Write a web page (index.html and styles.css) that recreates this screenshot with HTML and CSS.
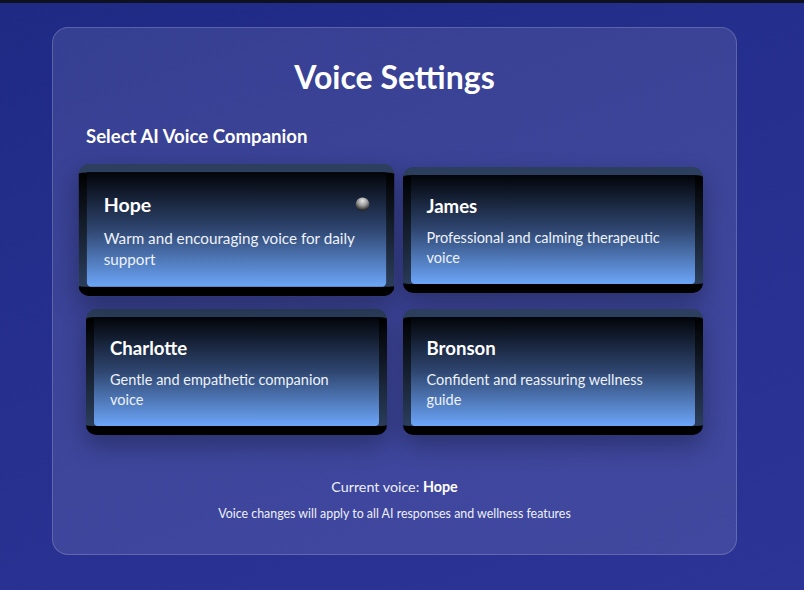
FILE: index.html
```html
<!DOCTYPE html>
<html>
<head>
<meta charset="utf-8">
<link rel="stylesheet" href="styles.css">
</head>
<body>
<div class="topbar"></div>
<div class="page">
  <section class="panel">
    <h1 class="title">Voice Settings</h1>
    <h2 class="subtitle">Select AI Voice Companion</h2>
    <div class="voices">
      <div class="voice selected">
        <div class="voice-inner">
          <div class="voice-name">Hope</div>
          <div class="voice-desc">Warm and encouraging voice for daily support</div>
          <span class="dot"></span>
        </div>
      </div>
      <div class="voice">
        <div class="voice-inner">
          <div class="voice-name">James</div>
          <div class="voice-desc">Professional and calming therapeutic voice</div>
        </div>
      </div>
      <div class="voice">
        <div class="voice-inner">
          <div class="voice-name">Charlotte</div>
          <div class="voice-desc">Gentle and empathetic companion voice</div>
        </div>
      </div>
      <div class="voice">
        <div class="voice-inner">
          <div class="voice-name">Bronson</div>
          <div class="voice-desc">Confident and reassuring wellness guide</div>
        </div>
      </div>
    </div>
    <p class="current">Current voice: <strong>Hope</strong></p>
    <p class="note">Voice changes will apply to all AI responses and wellness features</p>
  </section>
</div>
</body>
</html>
```

FILE: styles.css
```css
* { box-sizing: border-box; }
html, body { height: 100%; }
body {
  margin: 0;
  font-family: Lato, "Open Sans", sans-serif;
  color: #fff;
  background: linear-gradient(160deg, #1f2a85 0%, #27308f 50%, #2c3596 100%);
  min-height: 590px;
}
.topbar { height: 3px; background: #0e1220; }
.page {
  display: flex;
  justify-content: center;
  padding: 24px 15px 0 0;
}
.panel {
  width: 685px;
  border-radius: 16px;
  background: rgba(255, 255, 255, 0.1);
  border: 1px solid rgba(255, 255, 255, 0.18);
  padding: 29px 33px 32px;
}
.title {
  margin: 0;
  font-size: 32px;
  line-height: 40px;
  font-weight: 700;
  text-align: center;
}
.subtitle {
  margin: 27px 0 19px;
  font-size: 18.6px;
  line-height: 24px;
  font-weight: 700;
}
.voices {
  display: grid;
  grid-template-columns: 1fr 1fr;
  gap: 16px 16px;
}
.voice {
  border-radius: 10px;
  border-top: 8px solid #2c3f5e;
  border-bottom: 9px solid #000;
  padding: 0 8px;
  background: linear-gradient(180deg, #000 0%, #2b3e5c 100%);
  box-shadow: 0 10px 24px rgba(0, 0, 0, 0.3);
}
.voice.selected { transform: scale(1.05); }
.voice-inner {
  position: relative;
  height: 109px;
  padding: 18px 24px 16px 16px;
  border-radius: 0 0 4px 4px;
  background: linear-gradient(180deg, #020409 0%, #2f4670 50%, #6ca5f8 100%);
}
.voice-name {
  font-size: 18.6px;
  line-height: 27px;
  font-weight: 700;
  margin-bottom: 8px;
}
.voice-desc {
  font-size: 14.5px;
  line-height: 20px;
  color: #eef2fb;
}
.dot {
  position: absolute;
  top: 24px;
  right: 16px;
  width: 13px;
  height: 13px;
  border-radius: 50%;
  background: radial-gradient(circle at 50% 25%, #e6e6e6 0%, #9a9a9a 40%, #2a2a2a 75%, #000 100%);
}
.current {
  margin: 42px 0 0;
  text-align: center;
  font-size: 14.3px;
  line-height: 20px;
  color: #eef0fa;
}
.current strong { font-weight: 700; color: #fff; }
.note {
  margin: 9px 0 0;
  text-align: center;
  font-size: 12.4px;
  line-height: 16px;
  color: #eef0fa;
}
```
